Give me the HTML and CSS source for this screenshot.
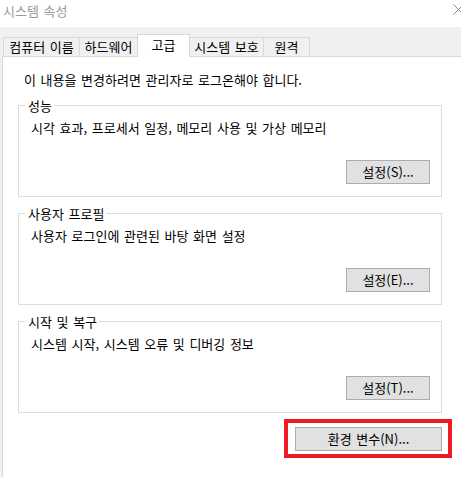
FILE: index.html
```html
<!DOCTYPE html>
<html lang="ko">
<head>
<meta charset="utf-8">
<title>시스템 속성</title>
<link rel="stylesheet" href="styles.css">
</head>
<body>
<div class="window">
  <header class="titlebar">
    <span class="title">시스템 속성</span>
    <svg class="close" width="11" height="11" viewBox="0 0 11 11"><path d="M0.5 0.5L10.5 10.5M10.5 0.5L0.5 10.5" stroke="#8c8c8c" stroke-width="1" fill="none"/></svg>
  </header>
  <div class="body">
    <div class="tabs">
      <div class="tab tab-name">컴퓨터 이름</div>
      <div class="tab tab-hw">하드웨어</div>
      <div class="tab tab-adv active">고급</div>
      <div class="tab tab-prot">시스템 보호</div>
      <div class="tab tab-remote">원격</div>
    </div>
    <div class="panel">
      <p class="notice">이 내용을 변경하려면 관리자로 로그온해야 합니다.</p>
      <fieldset class="group">
        <legend>성능</legend>
        <p class="desc">시각 효과, 프로세서 일정, 메모리 사용 및 가상 메모리</p>
        <div class="actions"><button class="btn">설정(S)...</button></div>
      </fieldset>
      <fieldset class="group">
        <legend>사용자 프로필</legend>
        <p class="desc">사용자 로그인에 관련된 바탕 화면 설정</p>
        <div class="actions"><button class="btn">설정(E)...</button></div>
      </fieldset>
      <fieldset class="group">
        <legend>시작 및 복구</legend>
        <p class="desc">시스템 시작, 시스템 오류 및 디버깅 정보</p>
        <div class="actions"><button class="btn">설정(T)...</button></div>
      </fieldset>
      <div class="env-row">
        <button class="btn btn-env">환경 변수(N)...</button>
      </div>
    </div>
  </div>
</div>
</body>
</html>
```
FILE: styles.css
```css
* { box-sizing: border-box; }
html, body { margin: 0; padding: 0; }
body {
  width: 461px;
  height: 477px;
  overflow: hidden;
  background: #ffffff;
  font-family: "Noto Sans CJK KR", "Noto Sans", sans-serif;
  font-size: 13px;
  word-spacing: 1px;
  color: #000;
}
.window {
  width: 461px;
  height: 477px;
  overflow: hidden;
  display: flex;
  flex-direction: column;
}
.titlebar {
  height: 27px;
  flex: none;
  background: #fff;
  display: flex;
  justify-content: space-between;
  align-items: flex-start;
  padding-left: 3px;
}
.title {
  color: #9a9a9a;
  line-height: 16px;
  margin-top: 3px;
}
.close {
  margin-top: 4px;
  margin-right: -3px;
  flex: none;
}
.body {
  flex: 1;
  background: #f0f0f0;
  padding: 7px 0 0 2px;
}
.tabs {
  display: flex;
  align-items: flex-end;
  height: 23px;
  margin-left: 1px;
  margin-bottom: -1px;
  position: relative;
  z-index: 1;
}
.tab {
  height: 20px;
  border: 1px solid #d9d9d9;
  background: #f0f0f0;
  text-align: center;
  line-height: 16px;
  padding-top: 1px;
  white-space: nowrap;
  margin-left: -1px;
}
.tab:first-child { margin-left: 0; }
.tab-name { width: 77px; }
.tab-hw { width: 59px; }
.tab-adv { width: 53px; }
.tab-prot { width: 75px; }
.tab-remote { width: 47px; }
.tab.active {
  height: 23px;
  background: #fff;
  border-bottom: none;
  padding-top: 2px;
  position: relative;
  z-index: 2;
}
.panel {
  background: #fff;
  border-top: 1px solid #d9d9d9;
  border-left: 1px solid #d9d9d9;
  margin-right: -10px;
  height: 430px;
  padding: 0 0 0 15px;
}
.notice {
  margin: 15px 0 0 0;
  padding-left: 6px;
  line-height: 16px;
}
.group {
  width: 424px;
  margin: 10px 0 0 0;
  padding: 0 11px 12px 12px;
  border: 1px solid #dcdcdc;
  min-width: 0;
}
.notice + .group { margin-top: 11px; }
.group legend {
  margin-left: -6px;
  padding: 0 2px 0 3px;
  line-height: 13px;
  height: 13px;
}
.desc {
  margin: 8px 0 0 0;
  line-height: 16px;
}
.actions {
  display: flex;
  justify-content: flex-end;
  margin-top: 24px;
}
.btn {
  font-family: inherit;
  font-size: 13px;
  word-spacing: 1px;
  color: #000;
  background: #e1e1e1;
  border: 1px solid #adadad;
  border-radius: 0;
  height: 24px;
  width: 84px;
  padding: 0;
  line-height: 20px;
  margin: 0;
}
.env-row {
  width: 424px;
  display: flex;
  justify-content: flex-end;
  margin-top: 14px;
}
.btn-env {
  width: 147px;
  position: relative;
}
.btn-env::after {
  content: "";
  position: absolute;
  left: -12px;
  top: -9px;
  right: -11px;
  bottom: -8px;
  border: 4px solid #ed1c24;
  pointer-events: none;
}
```
